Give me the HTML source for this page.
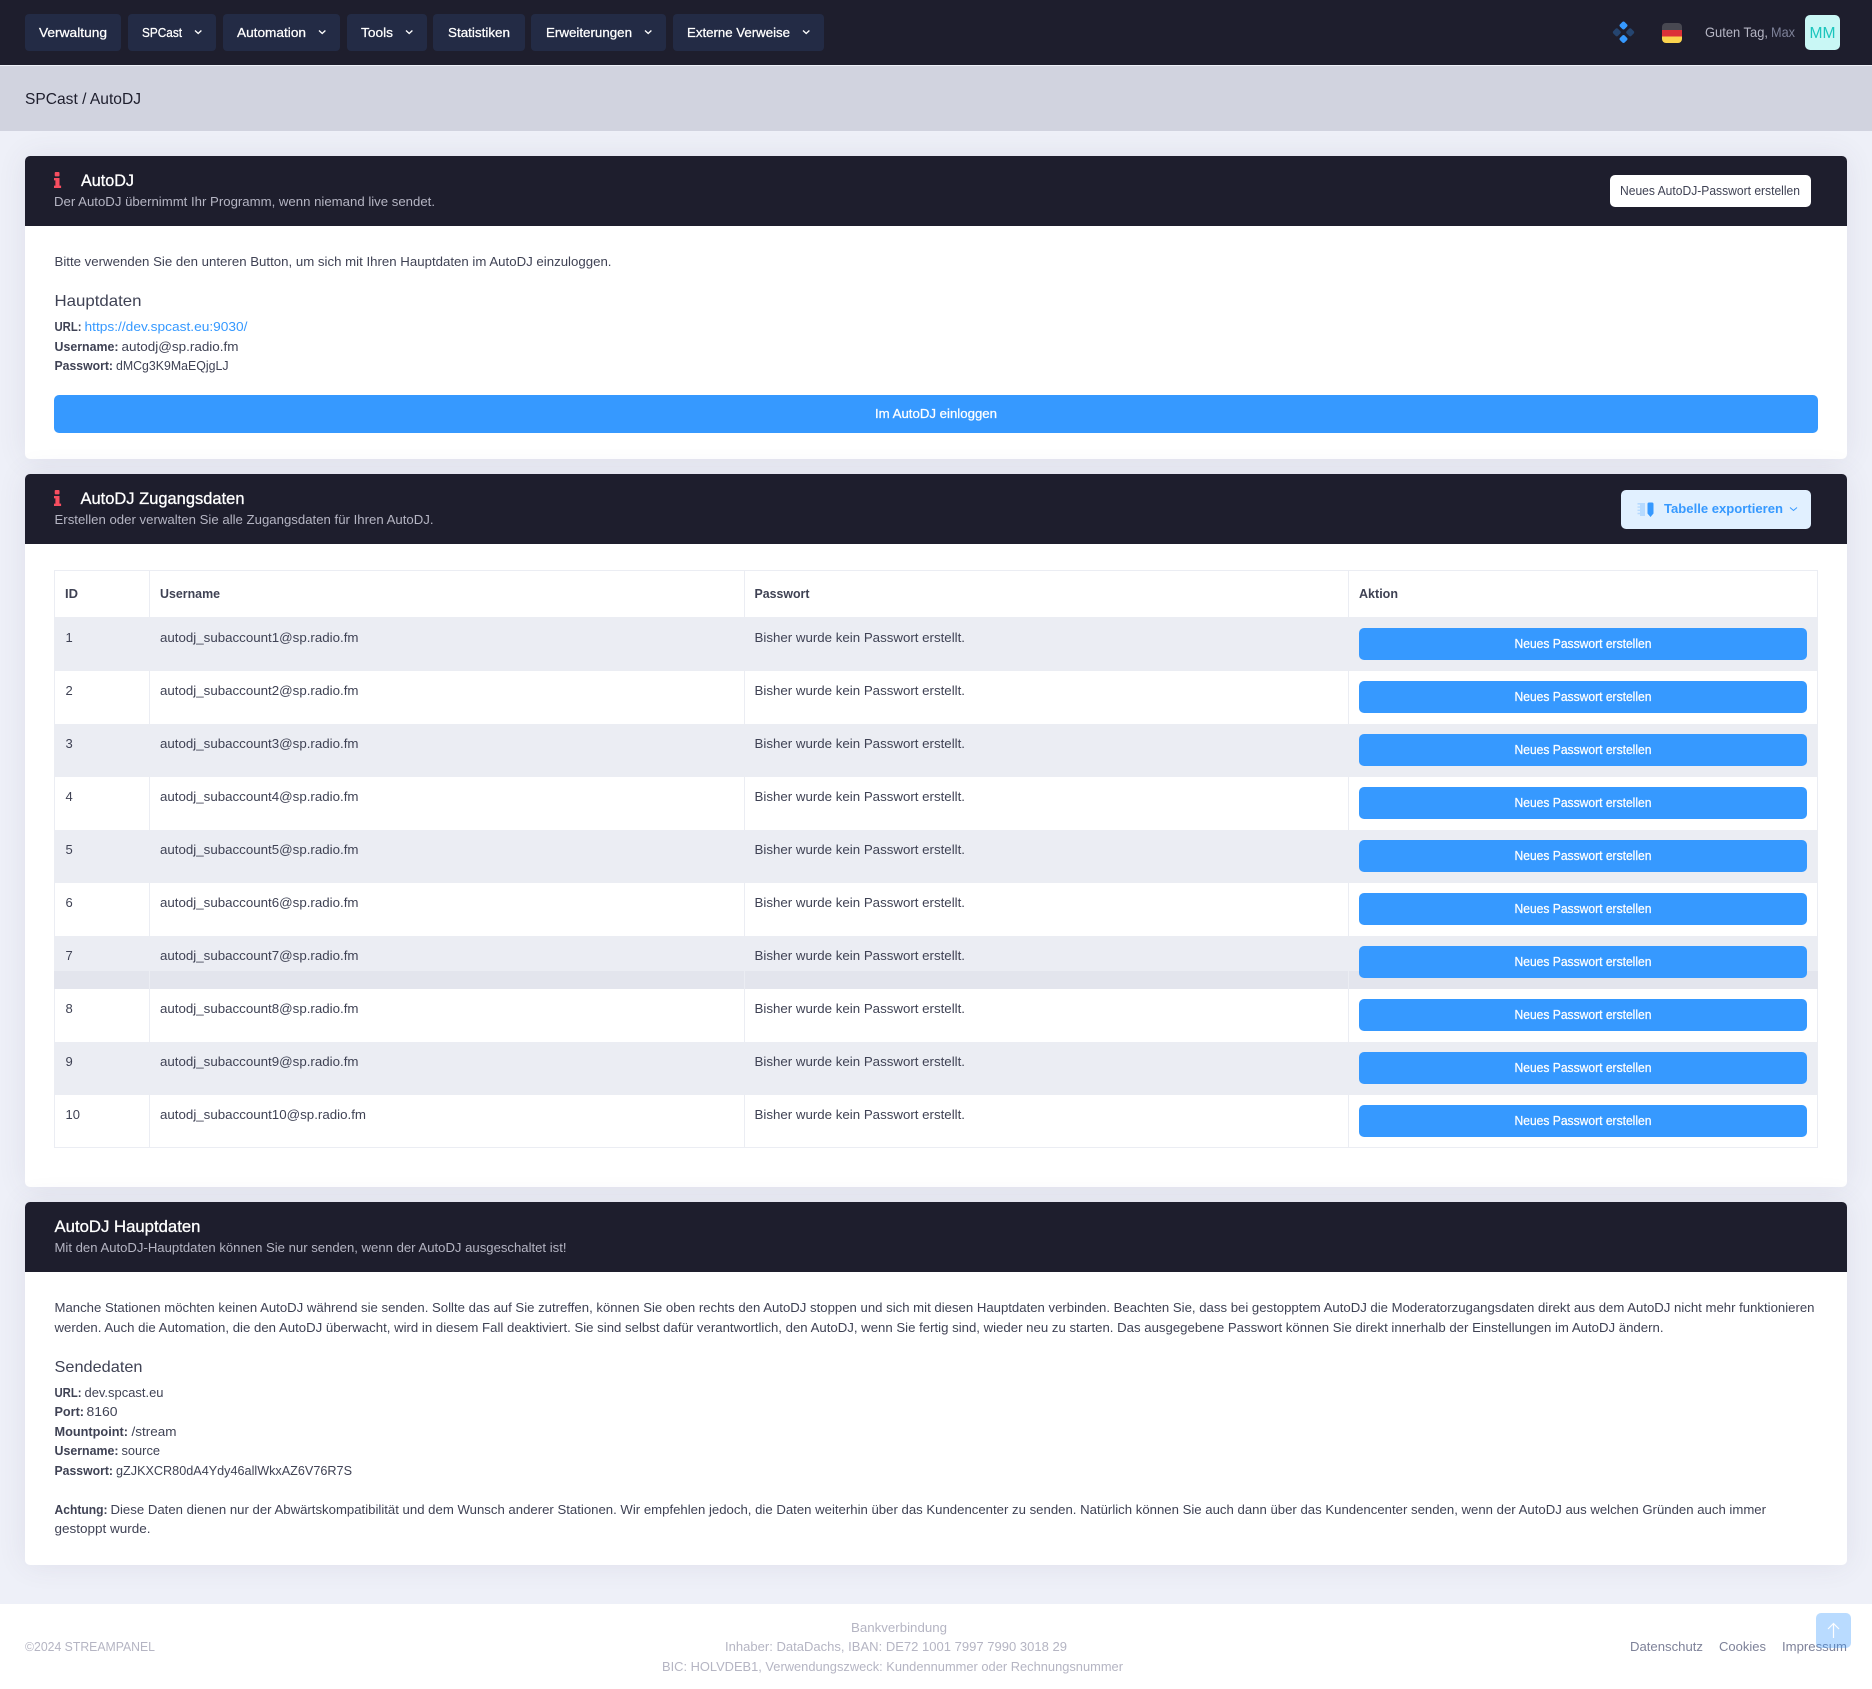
<!DOCTYPE html>
<html lang="de">
<head>
<meta charset="utf-8">
<title>SPCast / AutoDJ</title>
<style>
html,body{margin:0;padding:0;width:1872px;height:1689px;overflow:hidden;background:#eef0f8;font-family:"Liberation Sans",sans-serif}
.b{position:absolute;box-sizing:border-box}
.nav{top:14px;height:37px;background:#232b45;border-radius:4px}
.card{left:25px;width:1822px;background:#fff;border-radius:5px;box-shadow:0 0 30px rgba(82,63,105,.09)}
.head{left:25px;width:1822px;height:70px;background:#1e1e2d;border-radius:5px 5px 0 0}
.btn{background:#3699ff;border-radius:5px}
.rowbtn{left:1359px;width:448px;height:32px;background:#3699ff;border-radius:5px}
.stripe{left:54px;width:1764px;height:53px;background:#ebedf3}
svg.t{position:absolute;left:0;top:0}
svg.t text{font-family:"Liberation Sans",sans-serif;font-size:13px;fill:#3f4254}
.w{fill:#fff!important}
.n{fill:#fff!important;stroke:#fff;stroke-width:.25px}
.s{fill:#b5b5c3!important}
.bd{font-weight:700}
.h{font-size:16px!important}
.ft{fill:#b5b5c3!important}
.lk{fill:#7e8299!important}
.ti{fill:#fff!important;font-size:17px!important;stroke:#fff;stroke-width:.3px}
</style>
</head>
<body>
<div class="b" style="left:0;top:0;width:1872px;height:65px;background:#1e1e2d"></div>
<div class="b" style="left:0;top:65px;width:1872px;height:1px;background:#eef0f8"></div>
<div class="b" style="left:0;top:66px;width:1872px;height:65px;background:#d1d3df"></div>

<div class="b nav" style="left:25px;width:96px"></div>
<div class="b nav" style="left:128px;width:88px"></div>
<div class="b nav" style="left:223px;width:117px"></div>
<div class="b nav" style="left:347px;width:80px"></div>
<div class="b nav" style="left:433px;width:92px"></div>
<div class="b nav" style="left:531px;width:135px"></div>
<div class="b nav" style="left:673px;width:151px"></div>

<div class="b" style="left:1805px;top:15px;width:35px;height:35px;background:#c9f7f5;border-radius:5px"></div>

<div class="b card" style="top:156px;height:303px"></div>
<div class="b head" style="top:156px"></div>
<div class="b" style="left:1610px;top:175px;width:201px;height:32px;background:#fff;border-radius:5px"></div>
<div class="b btn" style="left:54px;top:395px;width:1764px;height:38px"></div>

<div class="b card" style="top:474px;height:713px"></div>
<div class="b head" style="top:474px"></div>
<div class="b" style="left:1621px;top:490px;width:190px;height:39px;background:#e1f0ff;border-radius:5px"></div>

<div class="b" style="left:54px;top:570px;width:1764px;height:578px;border:1px solid #ebedf3"></div>
<div class="b stripe" style="top:617px;height:54px"></div>
<div class="b stripe" style="top:724px"></div>
<div class="b stripe" style="top:830px"></div>
<div class="b stripe" style="top:936px"></div>
<div class="b" style="left:54px;top:971px;width:1764px;height:18px;background:#e3e5ed"></div>
<div class="b stripe" style="top:1042px"></div>
<div class="b" style="left:149px;top:570px;width:1px;height:578px;background:#ebedf3"></div>
<div class="b" style="left:744px;top:570px;width:1px;height:578px;background:#ebedf3"></div>
<div class="b" style="left:1348px;top:570px;width:1px;height:578px;background:#ebedf3"></div>

<div class="b rowbtn" style="top:628px"></div>
<div class="b rowbtn" style="top:681px"></div>
<div class="b rowbtn" style="top:734px"></div>
<div class="b rowbtn" style="top:787px"></div>
<div class="b rowbtn" style="top:840px"></div>
<div class="b rowbtn" style="top:893px"></div>
<div class="b rowbtn" style="top:946px"></div>
<div class="b rowbtn" style="top:999px"></div>
<div class="b rowbtn" style="top:1052px"></div>
<div class="b rowbtn" style="top:1105px"></div>

<div class="b card" style="top:1202px;height:363px"></div>
<div class="b head" style="top:1202px"></div>

<div class="b" style="left:0;top:1604px;width:1872px;height:85px;background:#fff"></div>

<svg class="t" width="1872" height="1689" viewBox="0 0 1872 1689" xmlns="http://www.w3.org/2000/svg">
<!-- nav -->
<g class="navt">
<text class="n" x="39" y="37" textLength="68" lengthAdjust="spacingAndGlyphs">Verwaltung</text>
<text class="n" x="142" y="37" textLength="40" lengthAdjust="spacingAndGlyphs">SPCast</text>
<text class="n" x="237" y="37" textLength="69" lengthAdjust="spacingAndGlyphs">Automation</text>
<text class="n" x="361" y="37" textLength="32" lengthAdjust="spacingAndGlyphs">Tools</text>
<text class="n" x="448" y="37" textLength="62" lengthAdjust="spacingAndGlyphs">Statistiken</text>
<text class="n" x="546" y="37" textLength="86" lengthAdjust="spacingAndGlyphs">Erweiterungen</text>
<text class="n" x="687" y="37" textLength="103" lengthAdjust="spacingAndGlyphs">Externe Verweise</text>
</g>
<g fill="none" stroke="#fff" stroke-width="1.3">
<path d="M195 30.5l3.2 3 3.2-3"/><path d="M319 30.5l3.2 3 3.2-3"/><path d="M406 30.5l3.2 3 3.2-3"/><path d="M645 30.5l3.2 3 3.2-3"/><path d="M803 30.5l3.2 3 3.2-3"/>
</g>
<!-- top right -->
<g fill="#3699ff">
<rect x="1620.2" y="22.2" width="6.6" height="6.6" rx="1.8" transform="rotate(45 1623.5 25.5)"/>
<rect x="1620.2" y="35.7" width="6.6" height="6.6" rx="1.8" transform="rotate(45 1623.5 39)"/>
<rect x="1613.5" y="29" width="6.6" height="6.6" rx="1.8" transform="rotate(45 1616.8 32.3)" opacity=".32"/>
<rect x="1626.9" y="29" width="6.6" height="6.6" rx="1.8" transform="rotate(45 1630.2 32.3)" opacity=".32"/>
</g>
<clipPath id="fl"><rect x="1662" y="23" width="20" height="20" rx="4"/></clipPath>
<g clip-path="url(#fl)"><rect x="1662" y="23" width="20" height="7" fill="#484851"/><rect x="1662" y="30" width="20" height="6.5" fill="#dc3238"/><rect x="1662" y="36.5" width="20" height="6.5" fill="#fbd44e"/></g>
<text x="1705" y="37" textLength="63" lengthAdjust="spacingAndGlyphs" style="font-size:14px;fill:#b5b5c3">Guten Tag,</text>
<text x="1771" y="37" textLength="24" lengthAdjust="spacingAndGlyphs" style="font-size:14px;fill:#7e8299">Max</text>
<text x="1809.5" y="38" textLength="26" lengthAdjust="spacingAndGlyphs" style="font-size:16px;fill:#1bc5bd">MM</text>
<!-- breadcrumb -->
<text x="25" y="104" textLength="116" lengthAdjust="spacingAndGlyphs" style="font-size:16px;fill:#1e1e2d">SPCast / AutoDJ</text>
<!-- card 1 -->
<path d="M55.6 172h3a1 1 0 0 1 .9 1v2.4a1 1 0 0 1-.9 1h-3a1 1 0 0 1-.9-1V173a1 1 0 0 1 .9-1zM54 178h5.5v7.6h1.6V188H54v-2.4h1.4v-5.2H54V178z" fill="#f64e60"/>
<text class="ti" x="81" y="186" textLength="53" lengthAdjust="spacingAndGlyphs">AutoDJ</text>
<text class="s" x="54" y="206" textLength="381" lengthAdjust="spacingAndGlyphs">Der AutoDJ übernimmt Ihr Programm, wenn niemand live sendet.</text>
<text x="1620" y="195" textLength="180" lengthAdjust="spacingAndGlyphs">Neues AutoDJ-Passwort erstellen</text>
<text x="54.5" y="266" textLength="557" lengthAdjust="spacingAndGlyphs">Bitte verwenden Sie den unteren Button, um sich mit Ihren Hauptdaten im AutoDJ einzuloggen.</text>
<text class="h" x="54.5" y="306" textLength="87" lengthAdjust="spacingAndGlyphs">Hauptdaten</text>
<text class="bd" x="54.5" y="331" textLength="27" lengthAdjust="spacingAndGlyphs">URL:</text>
<text x="84.5" y="331" textLength="163" lengthAdjust="spacingAndGlyphs" style="fill:#3699ff">https://dev.spcast.eu:9030/</text>
<text class="bd" x="54.5" y="351" textLength="64" lengthAdjust="spacingAndGlyphs">Username:</text>
<text x="121.5" y="351" textLength="117" lengthAdjust="spacingAndGlyphs">autodj@sp.radio.fm</text>
<text class="bd" x="54.5" y="370" textLength="58.5" lengthAdjust="spacingAndGlyphs">Passwort:</text>
<text x="116" y="370" textLength="112.5" lengthAdjust="spacingAndGlyphs">dMCg3K9MaEQjgLJ</text>
<text class="n" x="875" y="418" textLength="122" lengthAdjust="spacingAndGlyphs">Im AutoDJ einloggen</text>
<!-- card 2 -->
<path d="M55.6 490h3a1 1 0 0 1 .9 1v2.4a1 1 0 0 1-.9 1h-3a1 1 0 0 1-.9-1V491a1 1 0 0 1 .9-1zM54 496h5.5v7.6h1.6v2.4H54v-2.4h1.4v-5.2H54V496z" fill="#f64e60"/>
<text class="ti" x="80.5" y="504" textLength="164" lengthAdjust="spacingAndGlyphs">AutoDJ Zugangsdaten</text>
<text class="s" x="54.5" y="524" textLength="379" lengthAdjust="spacingAndGlyphs">Erstellen oder verwalten Sie alle Zugangsdaten für Ihren AutoDJ.</text>
<path d="M1637.5 503h7.5v13h-5v-1.8h-2.5v-1.4h2.5v-1.8h-2.5v-1.4h2.5v-1.8h-2.5v-1.4h2.5v-1.8h-2.5z" fill="#3699ff" opacity=".25"/>
<path d="M1647.5 504a1.5 1.5 0 0 1 1.5-1.5h3a1.5 1.5 0 0 1 1.5 1.5v9.5l-3 3.5-3-3.5z" fill="#3699ff"/>
<text class="bd" x="1664" y="513" textLength="119" lengthAdjust="spacingAndGlyphs" style="fill:#3699ff">Tabelle exportieren</text>
<path d="M1790 507.5l3.5 3 3.5-3" fill="none" stroke="#3699ff" stroke-width="1"/>
<!-- table head -->
<text class="bd" x="65" y="598" textLength="13" lengthAdjust="spacingAndGlyphs">ID</text>
<text class="bd" x="160" y="598" textLength="60" lengthAdjust="spacingAndGlyphs">Username</text>
<text class="bd" x="754.5" y="598" textLength="55" lengthAdjust="spacingAndGlyphs">Passwort</text>
<text class="bd" x="1359" y="598" textLength="39" lengthAdjust="spacingAndGlyphs">Aktion</text>
<!-- rows -->
<text x="65.5" y="642">1</text><text x="160" y="642" textLength="198.5" lengthAdjust="spacingAndGlyphs">autodj_subaccount1@sp.radio.fm</text><text x="754.5" y="642" textLength="210.5" lengthAdjust="spacingAndGlyphs">Bisher wurde kein Passwort erstellt.</text><text class="n" x="1514.5" y="648" textLength="137" lengthAdjust="spacingAndGlyphs">Neues Passwort erstellen</text>
<text x="65.5" y="695">2</text><text x="160" y="695" textLength="198.5" lengthAdjust="spacingAndGlyphs">autodj_subaccount2@sp.radio.fm</text><text x="754.5" y="695" textLength="210.5" lengthAdjust="spacingAndGlyphs">Bisher wurde kein Passwort erstellt.</text><text class="n" x="1514.5" y="701" textLength="137" lengthAdjust="spacingAndGlyphs">Neues Passwort erstellen</text>
<text x="65.5" y="748">3</text><text x="160" y="748" textLength="198.5" lengthAdjust="spacingAndGlyphs">autodj_subaccount3@sp.radio.fm</text><text x="754.5" y="748" textLength="210.5" lengthAdjust="spacingAndGlyphs">Bisher wurde kein Passwort erstellt.</text><text class="n" x="1514.5" y="754" textLength="137" lengthAdjust="spacingAndGlyphs">Neues Passwort erstellen</text>
<text x="65.5" y="801">4</text><text x="160" y="801" textLength="198.5" lengthAdjust="spacingAndGlyphs">autodj_subaccount4@sp.radio.fm</text><text x="754.5" y="801" textLength="210.5" lengthAdjust="spacingAndGlyphs">Bisher wurde kein Passwort erstellt.</text><text class="n" x="1514.5" y="807" textLength="137" lengthAdjust="spacingAndGlyphs">Neues Passwort erstellen</text>
<text x="65.5" y="854">5</text><text x="160" y="854" textLength="198.5" lengthAdjust="spacingAndGlyphs">autodj_subaccount5@sp.radio.fm</text><text x="754.5" y="854" textLength="210.5" lengthAdjust="spacingAndGlyphs">Bisher wurde kein Passwort erstellt.</text><text class="n" x="1514.5" y="860" textLength="137" lengthAdjust="spacingAndGlyphs">Neues Passwort erstellen</text>
<text x="65.5" y="907">6</text><text x="160" y="907" textLength="198.5" lengthAdjust="spacingAndGlyphs">autodj_subaccount6@sp.radio.fm</text><text x="754.5" y="907" textLength="210.5" lengthAdjust="spacingAndGlyphs">Bisher wurde kein Passwort erstellt.</text><text class="n" x="1514.5" y="913" textLength="137" lengthAdjust="spacingAndGlyphs">Neues Passwort erstellen</text>
<text x="65.5" y="960">7</text><text x="160" y="960" textLength="198.5" lengthAdjust="spacingAndGlyphs">autodj_subaccount7@sp.radio.fm</text><text x="754.5" y="960" textLength="210.5" lengthAdjust="spacingAndGlyphs">Bisher wurde kein Passwort erstellt.</text><text class="n" x="1514.5" y="966" textLength="137" lengthAdjust="spacingAndGlyphs">Neues Passwort erstellen</text>
<text x="65.5" y="1013">8</text><text x="160" y="1013" textLength="198.5" lengthAdjust="spacingAndGlyphs">autodj_subaccount8@sp.radio.fm</text><text x="754.5" y="1013" textLength="210.5" lengthAdjust="spacingAndGlyphs">Bisher wurde kein Passwort erstellt.</text><text class="n" x="1514.5" y="1019" textLength="137" lengthAdjust="spacingAndGlyphs">Neues Passwort erstellen</text>
<text x="65.5" y="1066">9</text><text x="160" y="1066" textLength="198.5" lengthAdjust="spacingAndGlyphs">autodj_subaccount9@sp.radio.fm</text><text x="754.5" y="1066" textLength="210.5" lengthAdjust="spacingAndGlyphs">Bisher wurde kein Passwort erstellt.</text><text class="n" x="1514.5" y="1072" textLength="137" lengthAdjust="spacingAndGlyphs">Neues Passwort erstellen</text>
<text x="65.5" y="1119">10</text><text x="160" y="1119" textLength="206" lengthAdjust="spacingAndGlyphs">autodj_subaccount10@sp.radio.fm</text><text x="754.5" y="1119" textLength="210.5" lengthAdjust="spacingAndGlyphs">Bisher wurde kein Passwort erstellt.</text><text class="n" x="1514.5" y="1125" textLength="137" lengthAdjust="spacingAndGlyphs">Neues Passwort erstellen</text>
<!-- card 3 -->
<text class="ti" x="54.5" y="1232" textLength="146" lengthAdjust="spacingAndGlyphs">AutoDJ Hauptdaten</text>
<text class="s" x="54.5" y="1252" textLength="512" lengthAdjust="spacingAndGlyphs">Mit den AutoDJ-Hauptdaten können Sie nur senden, wenn der AutoDJ ausgeschaltet ist!</text>
<text x="54.5" y="1312" textLength="1760" lengthAdjust="spacingAndGlyphs">Manche Stationen möchten keinen AutoDJ während sie senden. Sollte das auf Sie zutreffen, können Sie oben rechts den AutoDJ stoppen und sich mit diesen Hauptdaten verbinden. Beachten Sie, dass bei gestopptem AutoDJ die Moderatorzugangsdaten direkt aus dem AutoDJ nicht mehr funktionieren</text>
<text x="54.5" y="1332" textLength="1609" lengthAdjust="spacingAndGlyphs">werden. Auch die Automation, die den AutoDJ überwacht, wird in diesem Fall deaktiviert. Sie sind selbst dafür verantwortlich, den AutoDJ, wenn Sie fertig sind, wieder neu zu starten. Das ausgegebene Passwort können Sie direkt innerhalb der Einstellungen im AutoDJ ändern.</text>
<text class="h" x="54.5" y="1372" textLength="88" lengthAdjust="spacingAndGlyphs">Sendedaten</text>
<text class="bd" x="54.5" y="1397" textLength="27" lengthAdjust="spacingAndGlyphs">URL:</text>
<text x="84.5" y="1397" textLength="79" lengthAdjust="spacingAndGlyphs">dev.spcast.eu</text>
<text class="bd" x="54.5" y="1416" textLength="29.5" lengthAdjust="spacingAndGlyphs">Port:</text>
<text x="86.5" y="1416" textLength="31" lengthAdjust="spacingAndGlyphs">8160</text>
<text class="bd" x="54.5" y="1436" textLength="73.5" lengthAdjust="spacingAndGlyphs">Mountpoint:</text>
<text x="131.5" y="1436" textLength="45" lengthAdjust="spacingAndGlyphs">/stream</text>
<text class="bd" x="54.5" y="1455" textLength="64" lengthAdjust="spacingAndGlyphs">Username:</text>
<text x="121.5" y="1455" textLength="38.5" lengthAdjust="spacingAndGlyphs">source</text>
<text class="bd" x="54.5" y="1475" textLength="58.5" lengthAdjust="spacingAndGlyphs">Passwort:</text>
<text x="116" y="1475" textLength="236" lengthAdjust="spacingAndGlyphs">gZJKXCR80dA4Ydy46allWkxAZ6V76R7S</text>
<text class="bd" x="54.5" y="1514" textLength="53" lengthAdjust="spacingAndGlyphs">Achtung:</text>
<text x="110.5" y="1514" textLength="1655.5" lengthAdjust="spacingAndGlyphs">Diese Daten dienen nur der Abwärtskompatibilität und dem Wunsch anderer Stationen. Wir empfehlen jedoch, die Daten weiterhin über das Kundencenter zu senden. Natürlich können Sie auch dann über das Kundencenter senden, wenn der AutoDJ aus welchen Gründen auch immer</text>
<text x="54.5" y="1533" textLength="96" lengthAdjust="spacingAndGlyphs">gestoppt wurde.</text>
<!-- footer -->
<text class="ft" x="25" y="1651" textLength="130" lengthAdjust="spacingAndGlyphs">©2024 STREAMPANEL</text>
<text class="ft" x="851" y="1632" textLength="96" lengthAdjust="spacingAndGlyphs">Bankverbindung</text>
<text class="ft" x="725" y="1651" textLength="342" lengthAdjust="spacingAndGlyphs">Inhaber: DataDachs, IBAN: DE72 1001 7997 7990 3018 29</text>
<text class="ft" x="662" y="1671" textLength="461" lengthAdjust="spacingAndGlyphs">BIC: HOLVDEB1, Verwendungszweck: Kundennummer oder Rechnungsnummer</text>
<text class="lk" x="1630" y="1651" textLength="73" lengthAdjust="spacingAndGlyphs">Datenschutz</text>
<text class="lk" x="1719" y="1651" textLength="47" lengthAdjust="spacingAndGlyphs">Cookies</text>
<text class="lk" x="1782" y="1651" textLength="65" lengthAdjust="spacingAndGlyphs">Impressum</text>
<rect x="1816" y="1613" width="35" height="35" rx="5" fill="#3699ff" opacity=".35"/>
<path d="M1833.5 1638v-14M1828 1629l5.5-5.5 5.5 5.5" fill="none" stroke="#fff" stroke-width="1.2" opacity=".95"/>
</svg>
</body>
</html>
